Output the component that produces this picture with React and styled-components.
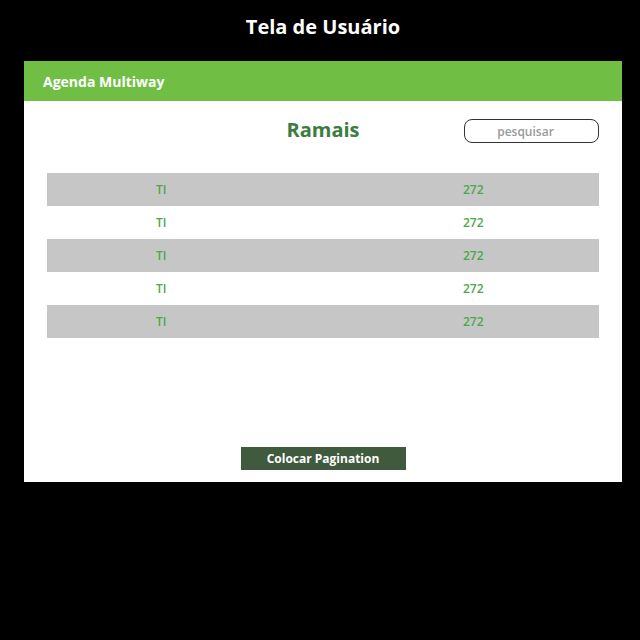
import React from 'react';
import styled, { createGlobalStyle } from 'styled-components';

const GlobalStyle = createGlobalStyle`
  html, body {
    margin: 0;
    padding: 0;
    background: #000;
    font-family: "Open Sans", "Noto Sans", sans-serif;
  }
`;

const Page = styled.div`
  width: 640px;
  height: 640px;
  background: #000;
  padding: 13px 18px 0 24px;
  box-sizing: border-box;
`;

const PageTitle = styled.h1`
  margin: 0 0 20px;
  text-align: center;
  color: #fff;
  font-size: 20px;
  font-weight: 700;
  line-height: 28px;
  width: 598px;
`;

const Card = styled.div`
  width: 598px;
  height: 421px;
  background: #fff;
  display: flex;
  flex-direction: column;
`;

const CardHeader = styled.div`
  height: 40px;
  background: #70be44;
  display: flex;
  align-items: center;
  padding-left: 19px;
  color: #fff;
  font-size: 14px;
  font-weight: 700;
`;

const CardBody = styled.div`
  flex: 1;
  display: flex;
  flex-direction: column;
  padding: 18px 23px 12px 23px;
`;

const TopBar = styled.div`
  display: grid;
  grid-template-columns: 1fr auto 1fr;
  align-items: start;
  height: 24px;
  margin-bottom: 30px;
`;

const Heading = styled.h2`
  grid-column: 2;
  margin: 0;
  color: #3a7d3e;
  font-size: 20px;
  font-weight: 700;
  line-height: 22px;
`;

const Search = styled.input`
  grid-column: 3;
  justify-self: end;
  width: 135px;
  height: 24px;
  box-sizing: border-box;
  border: 1px solid #333;
  border-radius: 8px;
  padding: 0 12px 0 0;
  font-family: inherit;
  font-size: 12px;
  font-weight: 600;
  text-align: center;
  outline: none;
  &::placeholder {
    color: #9a9a9a;
  }
`;

const Table = styled.div`
  display: flex;
  flex-direction: column;
`;

const Row = styled.div`
  display: grid;
  grid-template-columns: 416px 1fr;
  height: 33px;
  align-items: center;
  background: ${p => (p.$shaded ? '#c6c6c6' : '#fff')};
  color: #4aa84a;
  font-size: 12px;
  font-weight: 600;
`;

const Cell = styled.span`
  padding-left: ${p => p.$indent}px;
`;

const Footer = styled.div`
  margin-top: auto;
  display: flex;
  justify-content: center;
`;

const PageButton = styled.button`
  width: 165px;
  height: 23px;
  background: #3f5a3c;
  color: #fff;
  border: none;
  font-family: inherit;
  font-size: 12px;
  font-weight: 700;
  cursor: pointer;
`;

const rows = [
  { setor: 'TI', ramal: '272' },
  { setor: 'TI', ramal: '272' },
  { setor: 'TI', ramal: '272' },
  { setor: 'TI', ramal: '272' },
  { setor: 'TI', ramal: '272' },
];

const App = () => {
  return (
    <>
      <GlobalStyle />
      <Page>
        <PageTitle>Tela de Usuário</PageTitle>
        <Card>
          <CardHeader>Agenda Multiway</CardHeader>
          <CardBody>
            <TopBar>
              <Heading>Ramais</Heading>
              <Search placeholder="pesquisar" />
            </TopBar>
            <Table>
              {rows.map((r, i) => (
                <Row key={i} $shaded={i % 2 === 0}>
                  <Cell $indent={109}>{r.setor}</Cell>
                  <Cell $indent={0}>{r.ramal}</Cell>
                </Row>
              ))}
            </Table>
            <Footer>
              <PageButton>Colocar Pagination</PageButton>
            </Footer>
          </CardBody>
        </Card>
      </Page>
    </>
  );
};

export default App;
